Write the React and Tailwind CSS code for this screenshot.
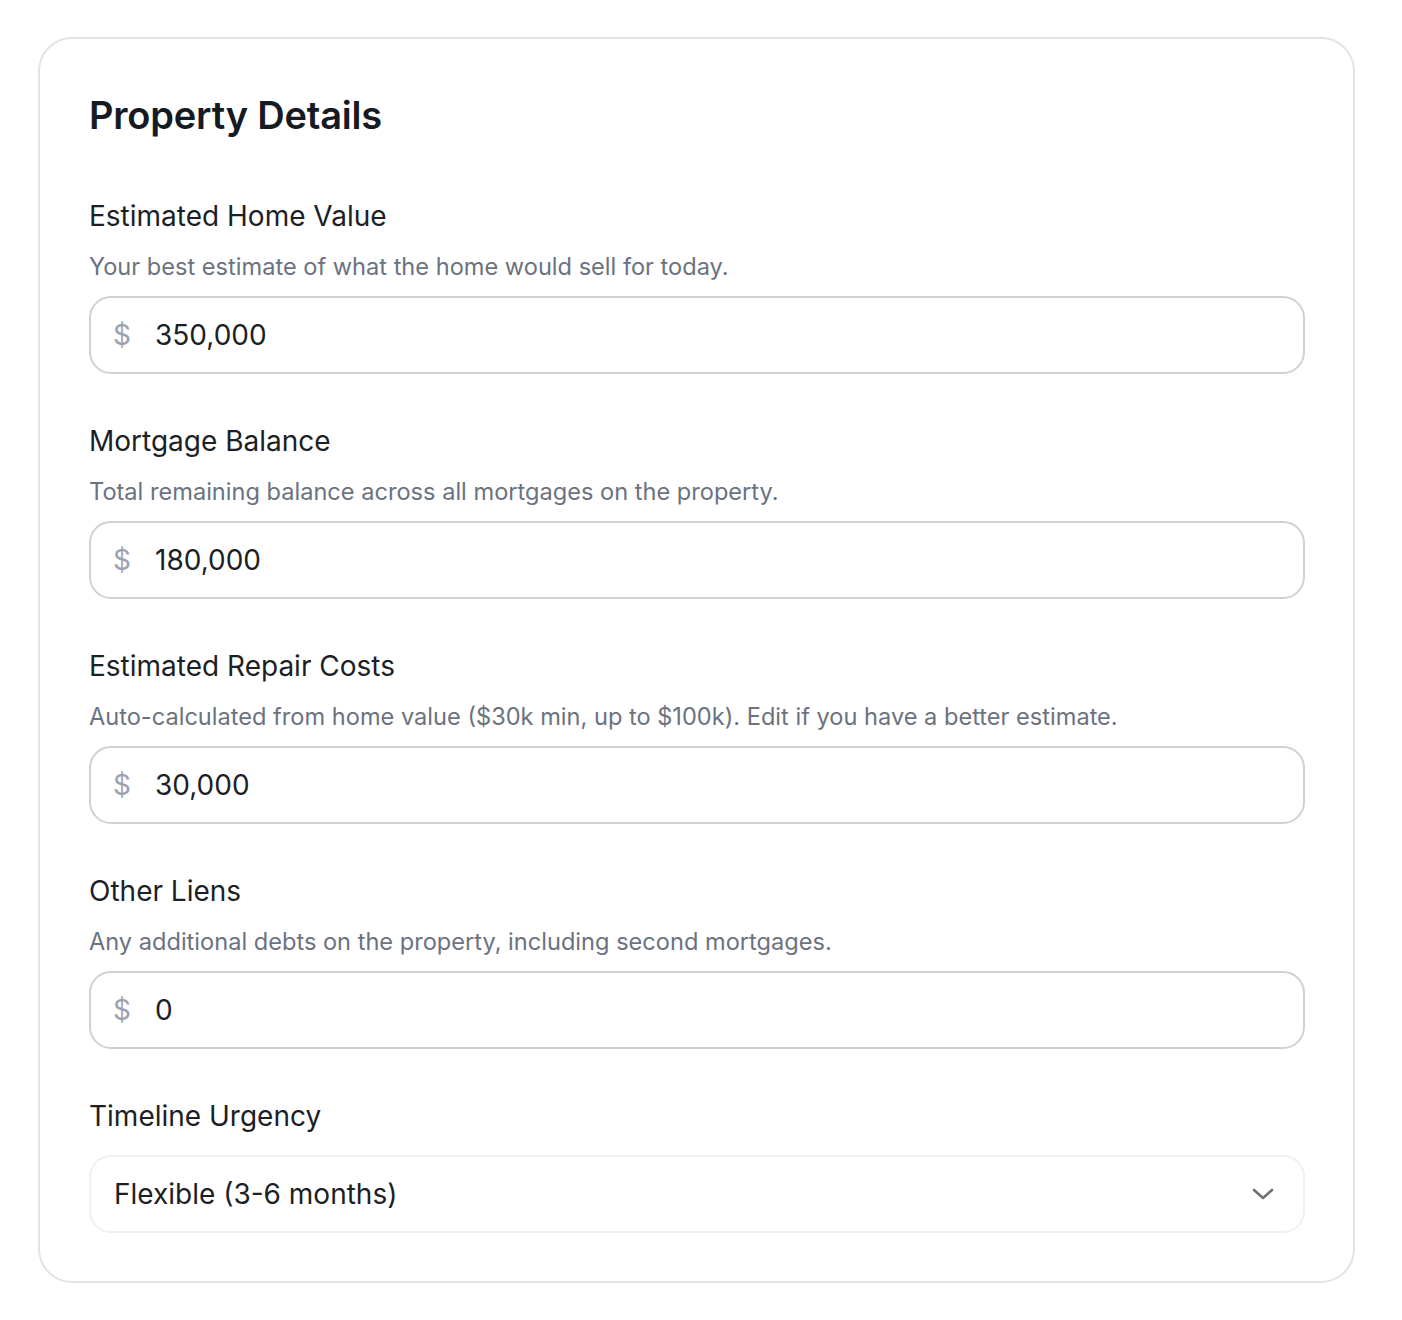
import { useState } from 'react';

const fields = [
  {
    id: 'homeValue',
    label: 'Estimated Home Value',
    help: 'Your best estimate of what the home would sell for today.',
    value: '350,000',
  },
  {
    id: 'mortgage',
    label: 'Mortgage Balance',
    help: 'Total remaining balance across all mortgages on the property.',
    value: '180,000',
  },
  {
    id: 'repairs',
    label: 'Estimated Repair Costs',
    help: 'Auto-calculated from home value ($30k min, up to $100k). Edit if you have a better estimate.',
    value: '30,000',
  },
  {
    id: 'liens',
    label: 'Other Liens',
    help: 'Any additional debts on the property, including second mortgages.',
    value: '0',
  },
];

function MoneyField({ label, help, value, onChange }) {
  return (
    <div className="flex flex-col">
      <label className="h-[40px] leading-[40px] text-[28px] text-[#1c1f26]">{label}</label>
      <p className="mt-[15px] h-[32px] leading-[32px] text-[23.6px] text-[#6b7280]">{help}</p>
      <div className="mt-[13px] h-[78px] flex items-center border-2 border-[#cfd1d6] rounded-[22px] bg-white pl-[22px] pr-6">
        <span className="text-[28px] text-[#9ca3af] w-[42px]">$</span>
        <input
          className="flex-1 bg-transparent outline-none text-[28px] text-[#1c1f26]"
          value={value}
          onChange={(e) => onChange(e.target.value)}
        />
      </div>
    </div>
  );
}

export default function App() {
  const [values, setValues] = useState(
    Object.fromEntries(fields.map((f) => [f.id, f.value]))
  );

  return (
    <div
      className="min-h-screen bg-white pt-[37px] pl-[38px]"
      style={{ fontFamily: 'Inter, "Noto Sans", sans-serif' }}
    >
      <div className="w-[1317px] border-2 border-[#e2e2e7] rounded-[34px] p-12 pl-[49px]">
        <h2 className="h-[56px] leading-[56px] text-[38px] font-semibold tracking-[-0.2px] text-[#161a22]">
          Property Details
        </h2>

        <div className="mt-[53px] flex flex-col gap-[47px]">
          {fields.map((f) => (
            <MoneyField
              key={f.id}
              label={f.label}
              help={f.help}
              value={values[f.id]}
              onChange={(v) => setValues({ ...values, [f.id]: v })}
            />
          ))}

          <div className="flex flex-col">
            <label className="h-[40px] leading-[40px] text-[28px] text-[#1c1f26]">Timeline Urgency</label>
            <div className="mt-[19px] h-[78px] flex items-center justify-between border-2 border-[#f0f0f3] rounded-[22px] bg-white pl-[23px] pr-[29px]">
              <span className="text-[28px] text-[#1c1f26]">Flexible (3-6 months)</span>
              <svg width="22" height="14" viewBox="0 0 22 14" fill="none">
                <path d="M2 3l9 8 9-8" stroke="#6b6f76" strokeWidth="2.6" strokeLinecap="round" strokeLinejoin="round" />
              </svg>
            </div>
          </div>
        </div>
      </div>
    </div>
  );
}
